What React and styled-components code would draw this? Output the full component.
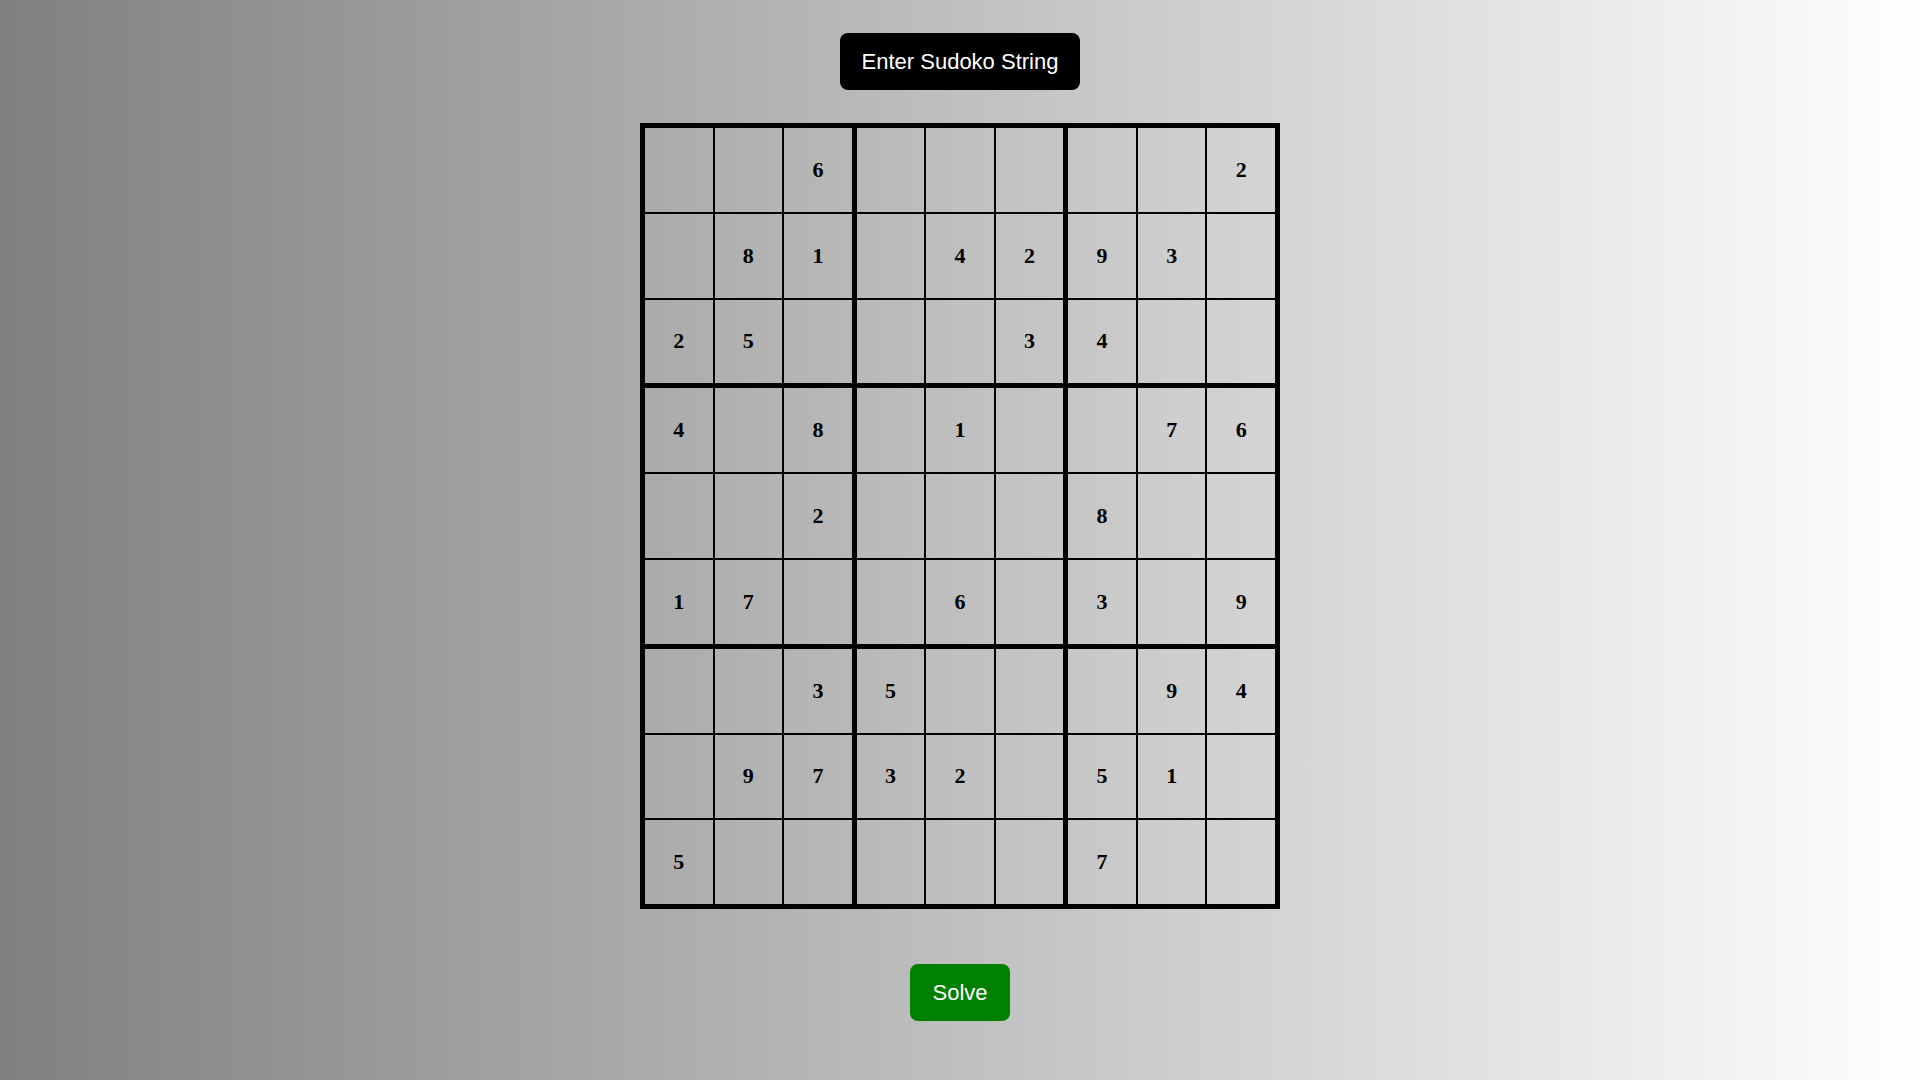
import React from "react";
import styled, { createGlobalStyle } from "styled-components";

const puzzle =
  "006000002081042930250003400408010076002000800170060309003500094097320510500000700";

const GlobalStyle = createGlobalStyle`
  body {
    margin: 0;
    font-family: "Liberation Sans", Arial, sans-serif;
  }
`;

const Page = styled.div`
  min-height: 100vh;
  background: linear-gradient(to right, grey, white);
  display: flex;
  flex-direction: column;
  align-items: center;
  padding-top: 33px;
  box-sizing: border-box;
`;

const Button = styled.button`
  font-family: "Liberation Sans", Arial, sans-serif;
  font-size: 22px;
  line-height: 25px;
  color: #fff;
  background: ${({ green }) => (green ? "#008000" : "#000")};
  border: none;
  border-radius: 8px;
  padding: 16px 22px;
  cursor: pointer;
`;

const Board = styled.div`
  display: grid;
  grid-template-columns: repeat(9, auto);
  border: 5px solid #000;
  margin: 33px 0 55px;
`;

const Cell = styled.div`
  width: 67.56px;
  height: 83.8px;
  display: flex;
  align-items: center;
  justify-content: center;
  font-family: "Liberation Serif", "Times New Roman", serif;
  font-weight: bold;
  font-size: 22px;
  color: #000;
  border-right: ${({ col }) =>
    col === 8 ? "none" : col % 3 === 2 ? "5px solid #000" : "2px solid #000"};
  border-bottom: ${({ row }) =>
    row === 8 ? "none" : row % 3 === 2 ? "5px solid #000" : "2px solid #000"};
`;

const App = () => {
  return (
    <Page>
      <GlobalStyle />
      <Button>Enter Sudoko String</Button>
      <Board>
        {puzzle.split("").map((ch, i) => (
          <Cell key={i} row={Math.floor(i / 9)} col={i % 9}>
            {ch === "0" ? "" : ch}
          </Cell>
        ))}
      </Board>
      <Button green>Solve</Button>
    </Page>
  );
};

export default App;
